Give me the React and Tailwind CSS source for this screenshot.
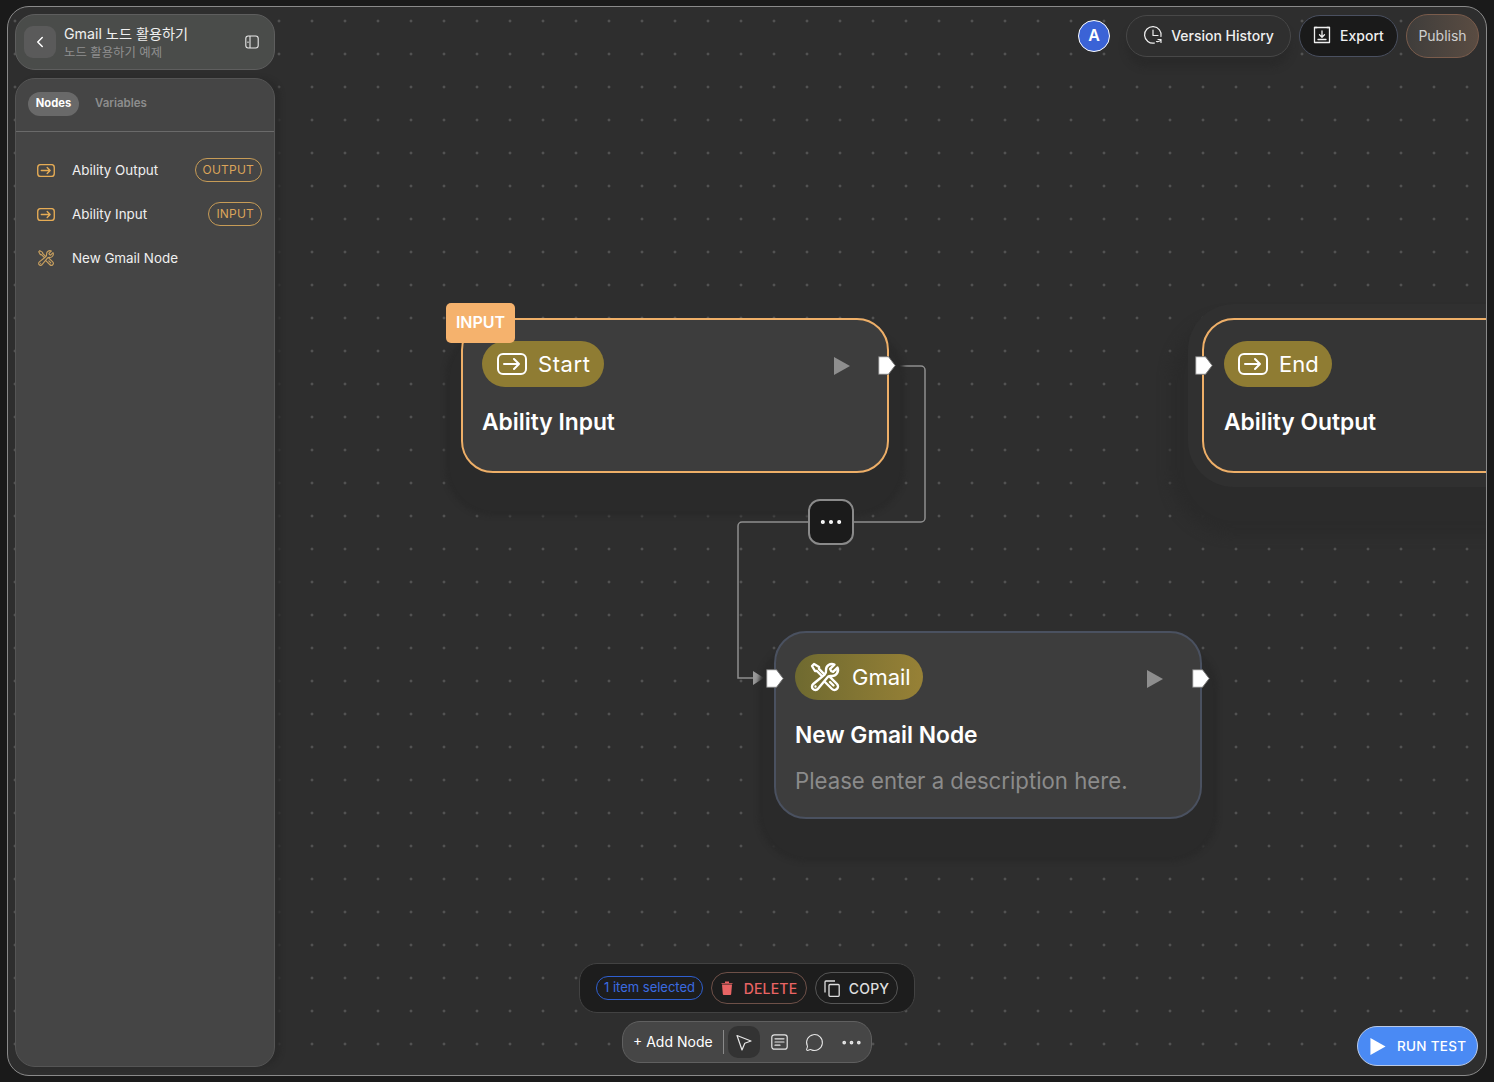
import React from 'react';
import { ChevronLeft, MessageCircle, Ellipsis } from 'lucide-react';
import { HiOutlineWrenchScrewdriver } from 'react-icons/hi2';

// --- Small drawn icons ---
const ArrowBoxIcon = ({ className }) => (
    <svg viewBox="0 0 30 22" fill="none" stroke="currentColor" strokeWidth="2" strokeLinecap="round" strokeLinejoin="round" className={className}>
        <rect x="1" y="1" width="28" height="20" rx="5" />
        <path d="M7 11h15M17 6l5 5-5 5" />
    </svg>
);

const PlayTriangle = ({ className }) => (
    <svg viewBox="0 0 16 18" className={className}>
        <path d="M0 0L16 9L0 18Z" fill="currentColor" />
    </svg>
);

const Handle = ({ className }) => (
    <svg viewBox="0 0 18 19" className={`absolute w-[18px] h-[19px] ${className}`}>
        <path d="M0.7 0.7H10.5L17.2 9.5L10.5 18.3H0.7Z" fill="#ffffff" stroke="#777777" strokeWidth="1" strokeLinejoin="round" />
    </svg>
);

const HistoryIcon = () => (
    <svg viewBox="0 0 20 20" fill="none" stroke="currentColor" strokeWidth="1.2" strokeLinecap="round" strokeLinejoin="round" className="w-5 h-5">
        <path d="M18 11.5A8.3 8.3 0 1 0 11.5 18" />
        <path d="M10 5v5.5h5" />
        <path d="M13.5 16.5a4 4 0 0 0 4.5-2M18 17.5v-3h-3" />
    </svg>
);

const ExportIcon = () => (
    <svg viewBox="0 0 18 18" fill="none" stroke="currentColor" strokeWidth="1.3" strokeLinecap="round" strokeLinejoin="round" className="w-[18px] h-[18px]">
        <path d="M4 1.5H1.5v15h15v-15H14" />
        <path d="M1.5 1.5h15M9 5v6M6.5 8.8L9 11.2l2.5-2.4M5 13.5h8" />
    </svg>
);

const PanelIcon = () => (
    <svg viewBox="0 0 14 14" fill="none" stroke="currentColor" strokeWidth="1.1" className="w-[14px] h-[14px]">
        <rect x="0.8" y="1" width="12.4" height="12" rx="2.5" />
        <path d="M5 1v12M3 6.5v1.5" />
    </svg>
);

const CursorIcon = () => (
    <svg viewBox="0 0 16 17" fill="none" stroke="currentColor" strokeWidth="1.2" strokeLinejoin="round" className="w-4 h-[17px]">
        <path d="M1 1.5L15 7L8.8 9.2L6 16Z" />
    </svg>
);

const NoteIcon = () => (
    <svg viewBox="0 0 17 16" fill="none" stroke="currentColor" strokeWidth="1.2" strokeLinecap="round" className="w-[17px] h-4">
        <rect x="0.8" y="0.8" width="15.4" height="14.4" rx="2.5" />
        <path d="M4 4.8h9M4 8h9M4 11.2h5" />
    </svg>
);

const CopyIcon = () => (
    <svg viewBox="0 0 16 17" fill="none" stroke="currentColor" strokeWidth="1.3" strokeLinejoin="round" className="w-4 h-[17px]">
        <rect x="5" y="4.5" width="10.2" height="11.8" rx="1" />
        <path d="M11 1H2a1 1 0 0 0-1 1v10.5" />
    </svg>
);

const TrashIcon = () => (
    <svg viewBox="0 0 12 14" className="w-3 h-[14px]" fill="#e96464">
        <path d="M1 3.5h10L10.2 13a1 1 0 0 1-1 1H2.8a1 1 0 0 1-1-1Z" />
        <path d="M0.5 2h11v.8H.5ZM4 .5h4V2H4Z" />
    </svg>
);

// --- Flow canvas node ---
const FlowNode = ({ icon, label, labelClass = '', title, description, pillClass, className }) => (
    <div className={`absolute rounded-[32px] pt-[21px] ${className}`}>
        <div className={`inline-flex items-center h-[46px] rounded-full gap-[11px] text-white text-[22px] ${pillClass}`}>
            {icon}
            <span className={labelClass}>{label}</span>
        </div>
        <h3 className="mt-[19px] text-[22.8px] leading-[32px] font-semibold text-white">{title}</h3>
        {description && <p className="mt-[14px] text-[22.2px] leading-[32px] text-[#8b8b8b]">{description}</p>}
    </div>
);

// --- Sidebar row ---
const NodeRow = ({ icon, label, badge }) => (
    <div className="flex items-center h-[44px] pl-[21px] pr-[12px]">
        {icon}
        <span className="ml-[17px] text-[13.4px] text-[#f0f0f0]">{label}</span>
        {badge && (
            <span className="ml-auto h-[24px] px-[7px] flex items-center rounded-full border border-[#c79c57] text-[12px] tracking-[0.2px] text-[#dba45a]">
                {badge}
            </span>
        )}
    </div>
);

const App = () => {
    return (
        <div className="w-[1494px] h-[1082px] pl-[7px] pt-[6px] bg-[#1a1a1a] overflow-hidden font-['Inter','Noto_Sans_CJK_KR',sans-serif]">
            <div className="relative w-[1480px] h-[1070px] rounded-[22px] border border-[#8a8a8a] bg-[#2e2e2e] bg-[radial-gradient(circle,#6c6c6c_0.9px,transparent_1.2px)] bg-[length:33px_33px] bg-[position:-9.5px_-2.5px] overflow-hidden">

                {/* Left sidebar */}
                <aside className="absolute left-[7px] top-[7px] w-[260px] h-[1053px] flex flex-col gap-[8px] z-10">
                    <div className="h-[56px] shrink-0 flex items-center rounded-[20px] border border-[#5e5e5e] bg-[#4a4c4a] pl-[8px] pr-[15px]">
                        <div className="w-[32px] h-[32px] flex items-center justify-center rounded-[9px] bg-[#5a5a5a] text-white">
                            <ChevronLeft size={18} strokeWidth={2} />
                        </div>
                        <div className="ml-[8px] flex-1">
                            <p className="mb-[2px] text-[14.2px] leading-[19px] text-[#f0f0f0]">Gmail 노드 활용하기</p>
                            <p className="text-[12.4px] leading-[16px] text-[#8f8f8f]">노드 활용하기 예제</p>
                        </div>
                        <div className="text-[#e8e8e8]"><PanelIcon /></div>
                    </div>
                    <div className="flex-1 rounded-[20px] border border-[#555555] bg-[#454545] shadow-[6px_0_4px_#2a2a2a]">
                        <div className="h-[53px] flex items-center gap-[16px] pl-[12px] pb-[2px] border-b border-[#6a6a6a]">
                            <span className="h-[24px] w-[51px] pb-[1px] flex items-center justify-center rounded-full bg-[#696969] text-[11.2px] font-bold text-white">Nodes</span>
                            <span className="text-[11.5px] font-semibold text-[#8d8d8d]">Variables</span>
                        </div>
                        <div className="pt-[16px]">
                            <NodeRow label="Ability Output" badge="OUTPUT" icon={<ArrowBoxIcon className="w-[18px] h-[13px] text-[#e6ac55] stroke-[2.3]" />} />
                            <NodeRow label="Ability Input" badge="INPUT" icon={<ArrowBoxIcon className="w-[18px] h-[13px] text-[#e6ac55] stroke-[2.3]" />} />
                            <NodeRow label="New Gmail Node" icon={<HiOutlineWrenchScrewdriver className="w-[18px] h-[18px] text-[#c9a05f]" />} />
                        </div>
                    </div>
                </aside>

                {/* Top right actions */}
                <div className="absolute right-[7px] top-[7px] flex items-center z-10">
                    <div className="w-[32px] h-[32px] mr-[16px] pb-[2px] flex items-center justify-center rounded-full border border-white bg-[#3b63d6] text-[16px] font-semibold text-white">A</div>
                    <button className="h-[42px] w-[165px] mr-[8px] pb-[2px] flex items-center justify-center gap-[8px] rounded-full border border-[#484848] bg-[#2f2f2f] shadow-[0_10px_6px_#2a2a2a] text-[14px] font-medium text-[#efefef]">
                        <HistoryIcon />Version History
                    </button>
                    <button className="h-[42px] w-[99px] mr-[8px] pb-[2px] flex items-center justify-center gap-[9px] rounded-full border border-[#4a5060] bg-[#1a1a1a] text-[14px] font-medium text-[#efefef]">
                        <ExportIcon />Export
                    </button>
                    <button className="h-[44px] w-[73px] pb-[2px] rounded-full border border-[#7a5c4c] bg-gradient-to-r from-[#3f3d3b] to-[#5a4c42] text-[14px] text-[#cfcfcf]">
                        Publish
                    </button>
                </div>

                {/* Edges */}
                <svg className="absolute left-0 top-0 w-full h-full" fill="none">
                    <path d="M892 359H913a4 4 0 0 1 4 4V511a4 4 0 0 1-4 4H846" stroke="#8f8f8f" strokeWidth="1.5" />
                    <path d="M800 515H734a4 4 0 0 0-4 4V671H746" stroke="#8f8f8f" strokeWidth="1.5" />
                    <path d="M745 664L756 671L745 678Z" fill="#999999" />
                </svg>

                {/* Nodes */}
                <FlowNode
                    className="left-[453px] top-[311px] w-[428px] h-[155px] pl-[19px] bg-[#3d3d3d] border-2 border-[#eeaf68] shadow-[0_27px_4px_16px_#2a2a2a]"
                    pillClass="bg-[#8f7c33] pl-[15px] pr-[13px]"
                    labelClass="tracking-[0.6px]"
                    icon={<ArrowBoxIcon className="w-[30px] h-[22px]" />}
                    label="Start"
                    title="Ability Input"
                />
                <div className="absolute left-[438px] top-[296px] w-[69px] h-[40px] pb-[2px] flex items-center justify-center rounded-[5px] bg-[#f5b26d] text-[16px] font-semibold text-white">INPUT</div>
                <PlayTriangle className="absolute left-[826px] top-[350px] w-4 h-[18px] text-[#8e8e8e]" />
                <Handle className="left-[870px] top-[349px]" />

                <FlowNode
                    className="left-[1194px] top-[311px] w-[428px] h-[155px] pl-[20px] bg-[#353535] border-2 border-[#eeaf68] shadow-[0_0_0_14px_#303030,0_30px_12px_32px_#2b2b2b]"
                    pillClass="bg-[#8f7c33] pl-[14px] pr-[13px]"
                    icon={<ArrowBoxIcon className="w-[30px] h-[22px]" />}
                    label="End"
                    title="Ability Output"
                />
                <Handle className="left-[1187px] top-[349px]" />

                <FlowNode
                    className="left-[766px] top-[624px] w-[428px] h-[188px] pl-[19px] bg-[#3d3d3d] border-2 border-[#4a5160] shadow-[0_27px_4px_16px_#2a2a2a]"
                    pillClass="bg-gradient-to-r from-[#6f6a30] to-[#978136] pl-[14px] pr-[12px]"
                    icon={<HiOutlineWrenchScrewdriver className="w-[32px] h-[32px] stroke-[1.8]" />}
                    label="Gmail"
                    title="New Gmail Node"
                    description="Please enter a description here."
                />
                <PlayTriangle className="absolute left-[1139px] top-[663px] w-4 h-[18px] text-[#8e8e8e]" />
                <Handle className="left-[758px] top-[662px]" />
                <Handle className="left-[1184px] top-[662px]" />

                {/* Edge menu */}
                <button className="absolute left-[800px] top-[492px] w-[46px] h-[46px] flex items-center justify-center rounded-[12px] border-2 border-[#8a8a8a] bg-[#1b1b1b] text-white">
                    <Ellipsis size={28} strokeWidth={1.5} />
                </button>

                {/* Bottom toolbars */}
                <div className="absolute left-0 right-0 top-[956px] flex flex-col items-center gap-[8px]">
                    <div className="w-[336px] h-[50px] flex items-center pl-[16px] rounded-[18px] border border-[#424242] bg-[#1d1d1d]">
                        <span className="h-[24px] w-[107px] flex items-center justify-center rounded-full border border-[#2f5fd0] text-[13px] text-[#3b6be0]">1 item selected</span>
                        <button className="ml-[8px] h-[32px] w-[96px] flex items-center justify-center gap-[11px] rounded-full border border-[#6e5048] text-[14px] font-medium tracking-[0.2px] text-[#e96464]">
                            <TrashIcon />DELETE
                        </button>
                        <button className="ml-[8px] h-[32px] w-[83px] flex items-center justify-center gap-[9px] rounded-full border border-[#555555] text-[14px] font-medium tracking-[0.2px] text-[#dedede]">
                            <CopyIcon />COPY
                        </button>
                    </div>
                    <div className="w-[250px] h-[42px] flex items-center pl-[10px] rounded-[18px] border border-[#606060] bg-[#464646] text-[#e6e6e6]">
                        <span className="pb-[2px] text-[14px] text-white">+ Add Node</span>
                        <span className="ml-[10px] w-px h-[24px] bg-[#8a8a8a]" />
                        <span className="ml-[4px] w-[32px] h-[32px] flex items-center justify-center rounded-[10px] bg-[#333333]"><CursorIcon /></span>
                        <span className="ml-[11px]"><NoteIcon /></span>
                        <MessageCircle size={19} strokeWidth={1.3} className="ml-[17px]" />
                        <Ellipsis size={25} strokeWidth={1.6} className="ml-[15px]" />
                    </div>
                </div>

                {/* Run test */}
                <button className="absolute left-[1349px] top-[1019px] w-[121px] h-[40px] flex items-center pl-[12px] gap-[11px] rounded-full border border-[#b9c9e6] bg-[#4a8af4] text-[13.5px] font-medium tracking-[0.3px] text-white">
                    <PlayTriangle className="w-[16px] h-[17px]" />RUN TEST
                </button>
            </div>
        </div>
    );
};

export default App;
